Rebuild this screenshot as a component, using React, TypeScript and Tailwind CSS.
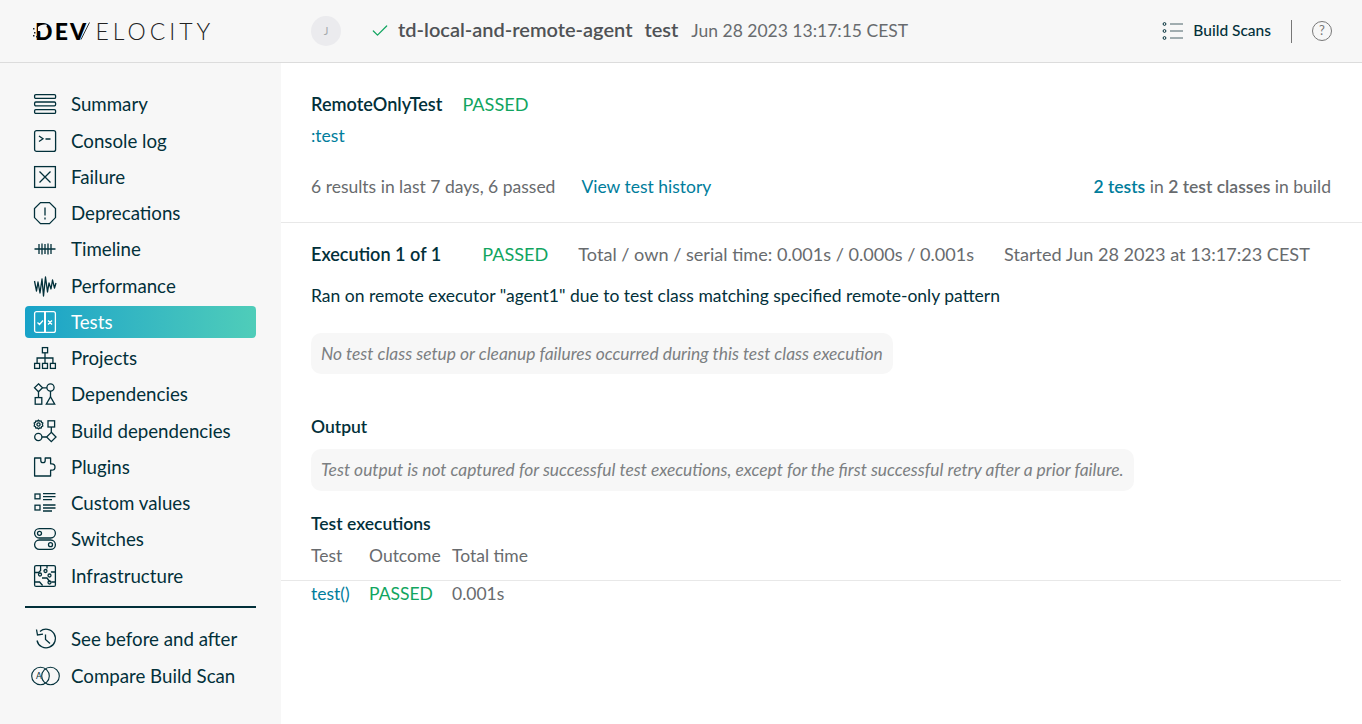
import React from 'react';
import { Check } from 'lucide-react';

const Ic = ({ children, w = 24 }: { children: React.ReactNode; w?: number }) => (
  <svg width={w} height="24" viewBox={`0 0 ${w} 24`} fill="none" stroke="currentColor" strokeWidth="1.3" className="shrink-0">
    {children}
  </svg>
);

const icons: Record<string, React.ReactNode> = {
  summary: <Ic><rect x="1.6" y="2.6" width="21" height="3.8" rx="1.2" /><rect x="1.6" y="10" width="21" height="3.8" rx="1.2" /><rect x="1.6" y="17.6" width="21" height="3.8" rx="1.2" /></Ic>,
  console: <Ic><rect x="1.6" y="1.6" width="21" height="20.8" rx="2" /><path d="M6 7l4 2.8L6 12.5M12.5 10h5" /></Ic>,
  failure: <Ic><rect x="1.6" y="1.6" width="20.8" height="20.8" /><path d="M6.500 6.500l11 11M17.500 6.500l-11 11" /></Ic>,
  deprecations: <Ic><path d="M7.500 1.600h9l6 6v9l-6 6h-9l-6-6v-9z" /><path d="M12 6.500v8M12 16.400v2" /></Ic>,
  timeline: <Ic><path d="M1.500 12h21M6 7v10M9 6.500v11M12 7v10M15 6.500v11M18 7v10" /></Ic>,
  performance: <Ic><path d="M1.500 7l2 10 1.500-9 2 11 2-14 1.500 17 2-19 2 15 1.500-9 2 6 1.500-9 2 8 1.500-5" strokeLinejoin="round" /></Ic>,
  tests: <Ic><rect x="1.600" y="1.600" width="20.800" height="20.800" rx="2" /><path d="M12 1.600v20.800" strokeWidth="2" /><path d="M4.500 12.500l2 2 3.500-4M15 10.500l4 4M19 10.500l-4 4" /></Ic>,
  projects: <Ic><rect x="9.400" y="1.600" width="5.200" height="5.200" /><rect x="1.600" y="17.400" width="5" height="5" /><rect x="9.500" y="17.400" width="5" height="5" /><rect x="17.400" y="17.400" width="5" height="5" /><path d="M12 6.800v10.600M4.100 17.400V12h15.800v5.400" /></Ic>,
  dependencies: <Ic><path d="M5.500 1.800l4 4-4 4-4-4z" /><circle cx="17.500" cy="5.500" r="3.600" /><path d="M9.500 5.800h4.400M5.500 9.800v5.600M17.500 9.100v6" /><rect x="2.200" y="15.600" width="6.600" height="6.600" /><path d="M17.500 14.800l4.200 7.400h-8.400z" /></Ic>,
  build: <Ic><circle cx="5.500" cy="5.500" r="1.600" /><path d="M5.500 1.200l1.100.9 1.500-.2.500 1.400 1.200.8-.4 1.400.4 1.400-1.200.8-.5 1.400-1.500-.2-1.100.9-1.100-.9-1.500.2-.5-1.400-1.200-.8.4-1.400-.4-1.400 1.200-.8.5-1.400 1.500.2z" /><rect x="15" y="1.800" width="6.600" height="6.200" /><path d="M18.300 8v5.300M9 18h4.600" /><circle cx="5.300" cy="18" r="3.600" /><path d="M18.300 13.300l4.700 4.700-4.700 4.700-4.700-4.700z" /></Ic>,
  plugins: <Ic><path d="M1.600 3h6.200v2.500a2.200 2.200 0 0 0 4.400 0V3h5.400v5.800h1.200a3.200 3.200 0 0 1 0 6.400h-1.200V21H1.600z" strokeLinejoin="round" /></Ic>,
  custom: <Ic><rect x="2" y="3" width="5" height="4.800" /><rect x="2" y="14.200" width="5" height="4.800" /><path d="M10 2.600h12.500M10 5.600h12.500M10 8.600h9M10 14h12.500M10 17h12.500M10 20h9" /></Ic>,
  switches: <Ic><rect x="1.600" y="1.600" width="20.800" height="9.400" rx="4.700" /><circle cx="6.500" cy="6.300" r="2" /><rect x="1.600" y="13" width="20.800" height="9.400" rx="4.700" /><circle cx="17.500" cy="17.700" r="2" /></Ic>,
  infra: <Ic><rect x="1.600" y="1.600" width="20.800" height="20.800" rx="1.500" /><path d="M1.600 8.500h4l2-2V1.600M1.600 18h5l3 3.500M22.400 8h-4.500M14 1.600v3M22.400 18h-4M9 14h5l3 4" /><circle cx="7" cy="10.500" r="1.500" /><circle cx="12.500" cy="7" r="1.500" /><circle cx="16.500" cy="11.500" r="1.500" /><circle cx="16.500" cy="18.500" r="1.500" /></Ic>,
  history: <Ic><path d="M7 4.500a9.300 9.300 0 1 1-3 9" /><path d="M3.500 2.500l1 5.500 5.500-.8M12.500 7.500v5l4.500 4" /></Ic>,
  compare: (
    <svg width="32" height="24" viewBox="0 0 32 24" fill="none" stroke="currentColor" strokeWidth="1.1" className="shrink-0">
      <circle cx="10.500" cy="12" r="8.800" />
      <circle cx="20.500" cy="12" r="8.800" />
      <text x="6" y="15" fontSize="8.500" fill="currentColor" stroke="none" fontFamily="Lato, sans-serif">A</text>
    </svg>
  ),
};

const nav = [
  ['summary', 'Summary'],
  ['console', 'Console log'],
  ['failure', 'Failure'],
  ['deprecations', 'Deprecations'],
  ['timeline', 'Timeline'],
  ['performance', 'Performance'],
  ['tests', 'Tests'],
  ['projects', 'Projects'],
  ['dependencies', 'Dependencies'],
  ['build', 'Build dependencies'],
  ['plugins', 'Plugins'],
  ['custom', 'Custom values'],
  ['switches', 'Switches'],
  ['infra', 'Infrastructure'],
];

function Sidebar() {
  return (
    <aside className="w-[281px] shrink-0 bg-[#f7f7f7] px-[25px] pt-[25.3px] text-[#02303a] text-[18.7px]">
      <nav className="flex flex-col gap-[4px]">
        {nav.map(([id, label]) => (
          <div
            key={id}
            className={
              id === 'tests'
                ? 'h-[32.25px] flex items-center gap-[14px] pl-[8px] rounded bg-gradient-to-r from-[#17a2c8] to-[#4fcdb9] text-white'
                : 'h-[32.25px] flex items-center gap-[14px] pl-[8px]'
            }
          >
            {icons[id]}
            <span>{label}</span>
          </div>
        ))}
      </nav>
      <div className="h-[2px] bg-[#02303a] mt-[14.4px] mb-[15px]" />
      <div className="flex flex-col gap-[4px]">
        <div className="h-[32.3px] flex items-center gap-[14px] pl-[8px]">
          {icons.history}
          <span>See before and after</span>
        </div>
        <div className="h-[32.3px] flex items-center gap-[9px] pl-[5px]">
          {icons.compare}
          <span>Compare Build Scan</span>
        </div>
      </div>
    </aside>
  );
}

function Logo() {
  return (
    <div className="w-[276px] flex items-center text-[23px] leading-none text-black">
      <span className="relative font-black tracking-[2.2px]">
        DEV
        {/* mascot cut into the D */}
        <svg width="20" height="18" viewBox="0 0 20 18" className="absolute -left-[2px] top-[2px]">
          <path d="M5 5c2-2 6-3 9-2l-1 3-3 1-1 4-2-2-2 0z" fill="#f7f7f7" />
          <path d="M0 6h1.500v1.500H0zM1 10h1.500v1.500H1zM0 13h1.500v1.500H0zM3 14h1.500v1.500H3z" fill="#222" />
        </svg>
      </span>
      {/* thin second arm of the V */}
      <svg width="10" height="18" viewBox="0 0 10 18" fill="none" stroke="#222" strokeWidth="0.9" className="-ml-[8px] shrink-0">
        <path d="M1 17.500L9.500 0.500" />
      </svg>
      <span className="ml-[5px] font-light tracking-[4px] text-[#222]">ELOCITY</span>
    </div>
  );
}

function Header() {
  return (
    <header className="h-[63px] shrink-0 bg-[#f7f7f7] border-b border-[#dcdcdc] flex items-center pl-[35px] pr-[30px]">
      <Logo />
      <div className="w-[30px] h-[30px] rounded-full bg-[#ebebee] text-[#a5aaad] text-[11px] flex items-center justify-center">J</div>
      <Check size={20} strokeWidth={1.5} className="text-[#11a560] ml-[29px]" />
      <span className="ml-[8px] mb-[4px] text-[20px] font-semibold text-[#4f5255]">td-local-and-remote-agent</span>
      <span className="ml-[12px] mb-[4px] text-[20px] font-semibold text-[#4f5255]">test</span>
      <span className="ml-[13px] text-[17.5px] text-[#686b6e]">Jun 28 2023 13:17:15 CEST</span>
      <div className="ml-auto flex items-center text-[#02303a]">
        <svg width="22" height="20" viewBox="0 0 22 20" fill="none" stroke="currentColor" strokeWidth="1" className="mr-[9px]">
          <circle cx="2.500" cy="3" r="1.400" /><circle cx="2.500" cy="10" r="1.400" /><circle cx="2.500" cy="17" r="1.400" />
          <path d="M8 3h13M8 10h13M8 17h13" stroke="#4a6269" />
        </svg>
        <span className="text-[15.5px] font-medium">Build Scans</span>
        <div className="w-px h-[23px] bg-[#777] mx-[20px]" />
        <div className="w-[20px] h-[20px] rounded-full border border-[#777] text-[#777] text-[13px] flex items-center justify-center">?</div>
      </div>
    </header>
  );
}

function Main() {
  return (
    <main className="flex-1 bg-white text-[17.5px] text-[#686b6e]">
      <section className="pl-[30px] pr-[31px] border-b border-[#e8e8e8] h-[160px] pt-[29px]">
        <div className="flex items-center h-[26px] gap-[20px] text-[18.1px]">
          <span className="font-semibold text-[#02303a]">RemoteOnlyTest</span>
          <span className="text-[#11a560]">PASSED</span>
        </div>
        <div className="text-[#007d9c] mt-[5px] h-[26px] leading-[26px]">:test</div>
        <div className="flex items-center mt-[25px] h-[26px]">
          <span>6 results in last 7 days, 6 passed</span>
          <span className="text-[#007d9c] ml-[26px]">View test history</span>
          <span className="ml-auto">
            <span className="text-[#007d9c] font-semibold">2 tests</span> in <span className="font-semibold">2 test classes</span> in build
          </span>
        </div>
      </section>
      <section className="pl-[30px] pr-[21px]">
        <div className="flex items-center h-[26px] mt-[19px] text-[18.1px]">
          <span className="font-semibold text-[#02303a]">Execution 1 of 1</span>
          <span className="text-[#11a560] ml-[41px]">PASSED</span>
          <span className="ml-[30px]">Total / own / serial time: 0.001s / 0.000s / 0.001s</span>
          <span className="ml-[30px]">Started Jun 28 2023 at 13:17:23 CEST</span>
        </div>
        <div className="text-[#02303a] mt-[15px] h-[26px] leading-[26px]">Ran on remote executor "agent1" due to test class matching specified remote-only pattern</div>
        <div className="mt-[24px] inline-block rounded-[10px] bg-[#f7f7f7] px-[10px] h-[41px] leading-[41px] italic text-[17.4px] text-[#7c7f82]">
          No test class setup or cleanup failures occurred during this test class execution
        </div>
        <div className="font-semibold text-[#02303a] mt-[40px] h-[26px] leading-[26px]">Output</div>
        <div className="mt-[9px] inline-block rounded-[10px] bg-[#f7f7f7] px-[10px] h-[42px] leading-[42px] italic text-[17.4px] text-[#7c7f82]">
          Test output is not captured for successful test executions, except for the first successful retry after a prior failure.
        </div>
      </section>
      <section className="mt-[20px] mr-[21px]">
        <div className="pl-[30px] font-semibold text-[#02303a] h-[26px] leading-[26px]">Test executions</div>
        <div className="pl-[30px] flex h-[37px] items-center border-b border-[#e8e8e8] pb-[12px] mt-[7px]">
          <span className="w-[58px]">Test</span>
          <span className="w-[83px]">Outcome</span>
          <span>Total time</span>
        </div>
        <div className="pl-[30px] flex h-[26px] items-center">
          <span className="w-[58px] text-[#007d9c]">test()</span>
          <span className="w-[83px] text-[#11a560]">PASSED</span>
          <span>0.001s</span>
        </div>
      </section>
    </main>
  );
}

export default function App() {
  return (
    <div className="h-[724px] w-[1362px] overflow-hidden flex flex-col bg-white font-['Lato',sans-serif]">
      <Header />
      <div className="flex flex-1 min-h-0">
        <Sidebar />
        <Main />
      </div>
    </div>
  );
}
